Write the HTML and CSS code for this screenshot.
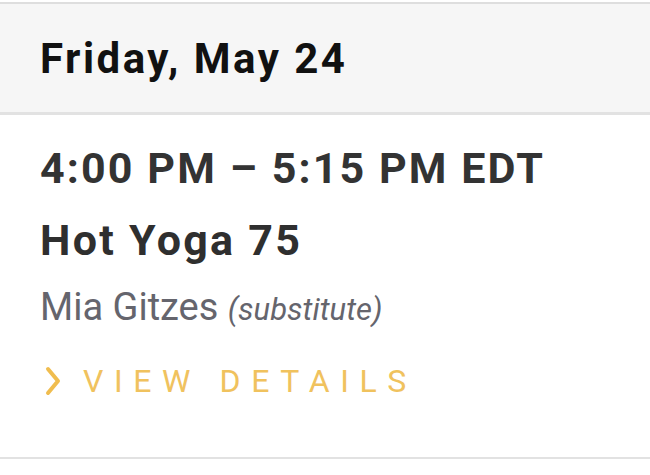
FILE: index.html
```html
<!DOCTYPE html>
<html>
<head>
<meta charset="utf-8">
<link rel="stylesheet" href="styles.css">
</head>
<body>
<div class="card">
  <div class="day-header">
    <h2 class="day-title">Friday, May 24</h2>
  </div>
  <div class="session">
    <div class="session-time">4:00 PM – 5:15 PM EDT</div>
    <div class="session-name">Hot Yoga 75</div>
    <div class="session-staff">Mia Gitzes <span class="sub">(substitute)</span></div>
    <a class="details-link" href="#">
      <svg class="chev" width="17" height="30" viewBox="0 0 17 30"><path d="M3 3 L13 15 L3 27" fill="none" stroke="#f0bd4f" stroke-width="4" stroke-linecap="round" stroke-linejoin="round"/></svg>
      <span class="details-text">VIEW DETAILS</span>
    </a>
  </div>
</div>
</body>
</html>
```
FILE: styles.css
```css
html, body {
  margin: 0;
  padding: 0;
  background: #ffffff;
}
body {
  font-family: Roboto, "Liberation Sans", sans-serif;
  padding-top: 2px;
}
.card {
  border-top: 2px solid #dedede;
  border-bottom: 2px solid #e2e2e2;
}
.day-header {
  background: #f6f6f6;
  border-bottom: 3px solid #e2e2e2;
  height: 108px;
  display: flex;
  align-items: center;
  padding-left: 40px;
}
.day-title {
  margin: 0;
  font-size: 42px;
  font-weight: 700;
  color: #111111;
  letter-spacing: 2.5px;
}
.session {
  padding: 28px 40px 58px 40px;
  display: flex;
  flex-direction: column;
}
.session-time {
  font-size: 43px;
  font-weight: 700;
  color: #333333;
  letter-spacing: 2.1px;
  line-height: 50px;
}
.session-name {
  margin-top: 22px;
  font-size: 43px;
  font-weight: 700;
  color: #2f2f2f;
  letter-spacing: 2.3px;
  line-height: 50px;
}
.session-staff {
  margin-top: 20px;
  font-size: 38px;
  color: #65656d;
  line-height: 44px;
}
.session-staff .sub {
  font-style: italic;
  font-size: 31px;
}
.details-link {
  margin-top: 31px;
  display: flex;
  align-items: center;
  gap: 21px;
  padding-left: 5px;
  text-decoration: none;
  color: #f0c25e;
}
.details-text {
  font-size: 32px;
  letter-spacing: 10.6px;
  line-height: 36px;
}
```
